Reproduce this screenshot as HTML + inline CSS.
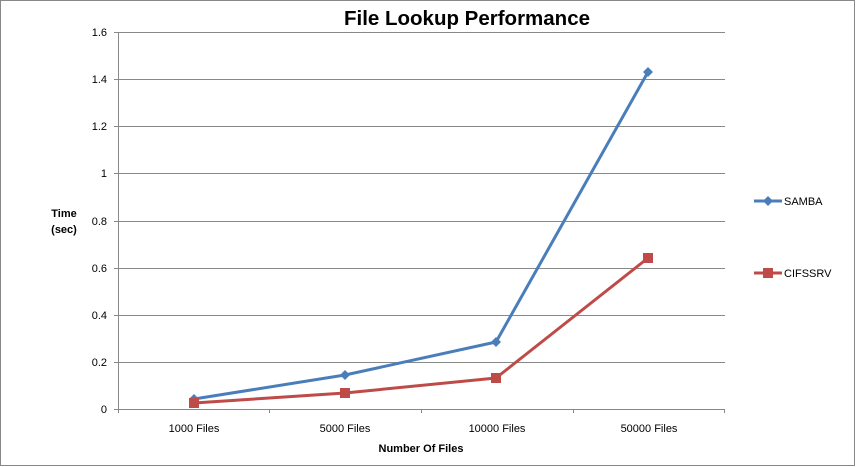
<!DOCTYPE html>
<html><head><style>body{margin:0;background:#fff}svg{display:block}</style></head><body>
<svg width="856" height="467" xmlns="http://www.w3.org/2000/svg" font-family="Liberation Sans, sans-serif">
<rect x="0.5" y="0.5" width="854" height="465" fill="#fff" stroke="#888"/>
<text x="467" y="25" font-size="20" font-weight="bold" text-anchor="middle" textLength="246" lengthAdjust="spacingAndGlyphs" fill="#000">File Lookup Performance</text>
<g stroke="#888" stroke-width="1">
<line x1="114" y1="32.5" x2="725" y2="32.5"/>
<line x1="114" y1="79.5" x2="725" y2="79.5"/>
<line x1="114" y1="126.5" x2="725" y2="126.5"/>
<line x1="114" y1="173.5" x2="725" y2="173.5"/>
<line x1="114" y1="221.5" x2="725" y2="221.5"/>
<line x1="114" y1="268.5" x2="725" y2="268.5"/>
<line x1="114" y1="315.5" x2="725" y2="315.5"/>
<line x1="114" y1="362.5" x2="725" y2="362.5"/>
<line x1="114" y1="409.5" x2="725" y2="409.5"/>
<line x1="118.5" y1="32" x2="118.5" y2="413"/>
<line x1="269.5" y1="409" x2="269.5" y2="413"/>
<line x1="421.5" y1="409" x2="421.5" y2="413"/>
<line x1="573.5" y1="409" x2="573.5" y2="413"/>
<line x1="724.5" y1="409" x2="724.5" y2="413"/>
</g>
<g font-size="11" text-anchor="end" fill="#000">
<text x="107" y="36">1.6</text><text x="107" y="83">1.4</text><text x="107" y="130">1.2</text>
<text x="107" y="177">1</text><text x="107" y="225">0.8</text><text x="107" y="272">0.6</text>
<text x="107" y="319">0.4</text><text x="107" y="366">0.2</text><text x="107" y="413">0</text>
</g>
<g font-size="11" text-anchor="middle" fill="#000">
<text x="194" y="432">1000 Files</text><text x="345" y="432">5000 Files</text>
<text x="497" y="432">10000 Files</text><text x="649" y="432">50000 Files</text>
</g>
<text x="421" y="452" font-size="11" font-weight="bold" text-anchor="middle">Number Of Files</text>
<text x="64" y="217" font-size="11" font-weight="bold" text-anchor="middle">Time</text>
<text x="64" y="233" font-size="11" font-weight="bold" text-anchor="middle">(sec)</text>
<polyline points="194,399 345,375 496,342 648,72" fill="none" stroke="#4a7ebb" stroke-width="3" stroke-linejoin="round"/>
<g fill="#4a7ebb">
<polygon points="194,394 199,399 194,404 189,399"/><polygon points="345,370 350,375 345,380 340,375"/>
<polygon points="496,337 501,342 496,347 491,342"/><polygon points="648,67 653,72 648,77 643,72"/>
</g>
<polyline points="194,403 345,393 496,378 648,258" fill="none" stroke="#be4b48" stroke-width="3" stroke-linejoin="round"/>
<g fill="#be4b48">
<rect x="189" y="398" width="10" height="10"/><rect x="340" y="388" width="10" height="10"/>
<rect x="491" y="373" width="10" height="10"/><rect x="643" y="253" width="10" height="10"/>
</g>
<line x1="754" y1="201" x2="782" y2="201" stroke="#4a7ebb" stroke-width="3"/>
<polygon points="768,196 773,201 768,206 763,201" fill="#4a7ebb"/>
<text x="784" y="205" font-size="11">SAMBA</text>
<line x1="754" y1="273" x2="782" y2="273" stroke="#be4b48" stroke-width="3"/>
<rect x="763" y="268" width="10" height="10" fill="#be4b48"/>
<text x="784" y="277" font-size="11">CIFSSRV</text>
</svg>
</body></html>
